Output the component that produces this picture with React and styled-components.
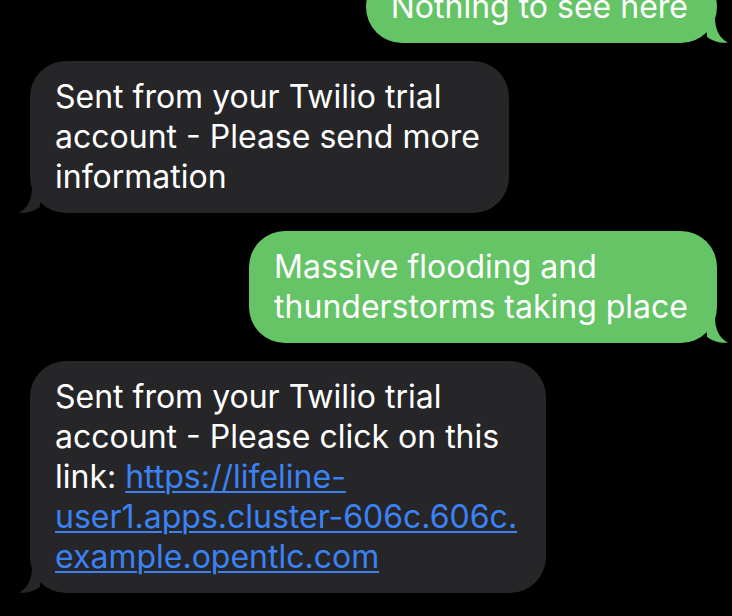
import React from "react";
import styled, { createGlobalStyle } from "styled-components";

const Global = createGlobalStyle`
  html, body { margin: 0; padding: 0; background: #000; }
  body { font-family: Inter, "Noto Sans", sans-serif; }
`;

const Thread = styled.div`
  display: flex;
  flex-direction: column;
  gap: 18px;
  margin-top: -29px;
  padding: 0 15px 0 30px;
  width: 732px;
  height: 645px;
  box-sizing: border-box;
  overflow: hidden;
`;

const Row = styled.div`
  display: flex;
  justify-content: ${(p) => (p.$out ? "flex-end" : "flex-start")};
`;

const Bubble = styled.div`
  position: relative;
  background: ${(p) => (p.$out ? "#65c466" : "#262628")};
  color: #fff;
  border-radius: 36px;
  padding: 16px 29px 16px 25px;
  font-size: 32px;
  line-height: 40px;
  white-space: nowrap;
`;

const Tail = styled.svg`
  position: absolute;
  bottom: 0;
  width: 22px;
  height: 26px;
  ${(p) => (p.$out ? "right: -11px;" : "left: -11px; transform: scaleX(-1);")}
`;

const Link = styled.a`
  color: #3a82f6;
  text-decoration: underline;
  text-decoration-thickness: 2px;
  text-underline-offset: 3px;
`;

function BubbleTail({ out }) {
  return (
    <Tail $out={out} viewBox="0 0 22 26">
      <path
        d="M0 0 L9 0 C9 12 13 21 22 25.6 C15 26.6 7 24.5 1 20 Z"
        fill={out ? "#65c466" : "#262628"}
      />
    </Tail>
  );
}

function Msg({ out, children }) {
  return (
    <Row $out={out}>
      <Bubble $out={out}>
        {children}
        <BubbleTail out={out} />
      </Bubble>
    </Row>
  );
}

export default function App() {
  return (
    <>
      <Global />
      <Thread>
        <Msg out>Nothing to see here</Msg>
        <Msg>
          Sent from your Twilio trial
          <br />
          account - Please send more
          <br />
          information
        </Msg>
        <Msg out>
          Massive flooding and
          <br />
          thunderstorms taking place
        </Msg>
        <Msg>
          Sent from your Twilio trial
          <br />
          account - Please click on this
          <br />
          link: <Link href="#">https://lifeline-</Link>
          <br />
          <Link href="#">user1.apps.cluster-606c.606c.</Link>
          <br />
          <Link href="#">example.opentlc.com</Link>
        </Msg>
      </Thread>
    </>
  );
}
